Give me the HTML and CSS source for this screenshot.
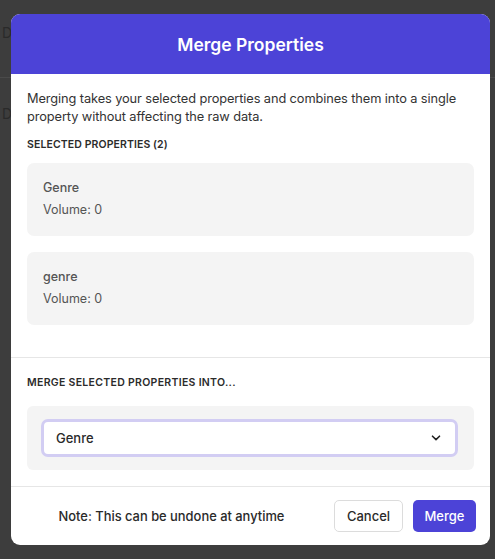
FILE: index.html
```html
<!DOCTYPE html>
<html>
<head>
<meta charset="utf-8">
<link rel="stylesheet" href="styles.css">
</head>
<body>
<div class="backdrop">
  <div class="bg-row first"><span class="bg-d">D</span></div>
  <div class="bg-row"><span class="bg-d">D</span></div>
</div>
<div class="modal">
  <div class="modal-header">Merge Properties</div>
  <div class="modal-body">
    <p class="intro">Merging takes your selected properties and combines them into a single property without affecting the raw data.</p>
    <div class="label">SELECTED PROPERTIES (2)</div>
    <div class="card">
      <div class="card-name">Genre</div>
      <div class="card-vol">Volume: 0</div>
    </div>
    <div class="card">
      <div class="card-name">genre</div>
      <div class="card-vol">Volume: 0</div>
    </div>
  </div>
  <div class="merge-section">
    <div class="label">MERGE SELECTED PROPERTIES INTO...</div>
    <div class="select-wrap">
      <div class="select">
        <span>Genre</span>
        <svg width="10" height="6" viewBox="0 0 10 6"><path d="M1.5 1.2 L5 4.6 L8.5 1.2" fill="none" stroke="#222" stroke-width="1.6" stroke-linecap="round" stroke-linejoin="round"/></svg>
      </div>
    </div>
  </div>
  <div class="footer">
    <div class="note">Note: This can be undone at anytime</div>
    <button class="btn cancel">Cancel</button>
    <button class="btn merge">Merge</button>
  </div>
</div>
</body>
</html>
```
FILE: styles.css
```css
html, body {
  margin: 0;
  padding: 0;
}
body {
  width: 495px;
  height: 559px;
  background: #3d3d3d;
  font-family: Inter, "Noto Sans", sans-serif;
  overflow: hidden;
  position: relative;
}
.backdrop {
  display: flex;
  flex-direction: column;
}
.bg-row {
  height: 78px;
  border-bottom: 1px solid #4a4a4a;
  box-sizing: border-box;
  padding: 22px 0 0 2px;
}
.bg-row + .bg-row {
  border-bottom: none;
  padding-top: 25px;
}
.bg-d {
  color: #2a2a2a;
  font-size: 14px;
}
.modal {
  position: absolute;
  left: 11px;
  top: 14px;
  width: 479px;
  height: 531px;
  background: #fff;
  border-radius: 9px;
  overflow: hidden;
  display: flex;
  flex-direction: column;
}
.modal-header {
  height: 60px;
  flex: none;
  background: #4c43d7;
  color: #fff;
  font-weight: 600;
  font-size: 17.5px;
  display: flex;
  align-items: center;
  justify-content: center;
}
.modal-body {
  padding: 16px 16px 32px;
  border-bottom: 1px solid #e6e6e6;
}
.intro {
  margin: 0;
  font-size: 12.8px;
  line-height: 18px;
  color: #333;
  letter-spacing: -0.1px;
}
.label {
  font-size: 10.5px;
  font-weight: 600;
  color: #2b2b2b;
  line-height: 14px;
  margin-top: 12px;
  letter-spacing: 0.1px;
}
.card {
  background: #f4f4f4;
  border-radius: 7px;
  height: 73px;
  box-sizing: border-box;
  padding: 17px 16px;
  margin-top: 11px;
  color: #555;
  font-size: 12.5px;
}
.card + .card {
  margin-top: 16px;
}
.card-name {
  line-height: 16px;
  font-weight: 500;
}
.card-vol {
  line-height: 16px;
  margin-top: 6px;
}
.merge-section {
  padding: 18px 16px 16px;
  border-bottom: 1px solid #e6e6e6;
}
.merge-section .label {
  margin-top: 0;
  letter-spacing: 0.3px;
}
.select-wrap {
  margin-top: 16px;
  background: #f4f4f4;
  border-radius: 6px;
  height: 64px;
  box-sizing: border-box;
  padding: 13px 16px 13px 14px;
}
.select {
  height: 38px;
  box-sizing: border-box;
  border: 3px solid #d2cdf3;
  border-radius: 7px;
  background: #fff;
  display: flex;
  align-items: center;
  justify-content: space-between;
  padding: 0 14px 0 12px;
  font-size: 13px;
  font-weight: 500;
  color: #2a2a2a;
}
.footer {
  flex: 1;
  display: flex;
  align-items: center;
  padding: 0 14px 0 16px;
}
.note {
  flex: 1;
  text-align: center;
  font-size: 12.9px;
  font-weight: 500;
  color: #2a2a2a;
  margin-right: 18px;
}
.btn {
  font-family: inherit;
  font-size: 13px;
  font-weight: 500;
  height: 32px;
  border-radius: 5px;
  padding: 0;
  cursor: pointer;
}
.cancel {
  background: #fff;
  border: 1px solid #dcdcdc;
  color: #2a2a2a;
  width: 69px;
}
.merge {
  background: #4c43d7;
  border: none;
  color: #fff;
  margin-left: 10px;
  width: 63px;
}
```
